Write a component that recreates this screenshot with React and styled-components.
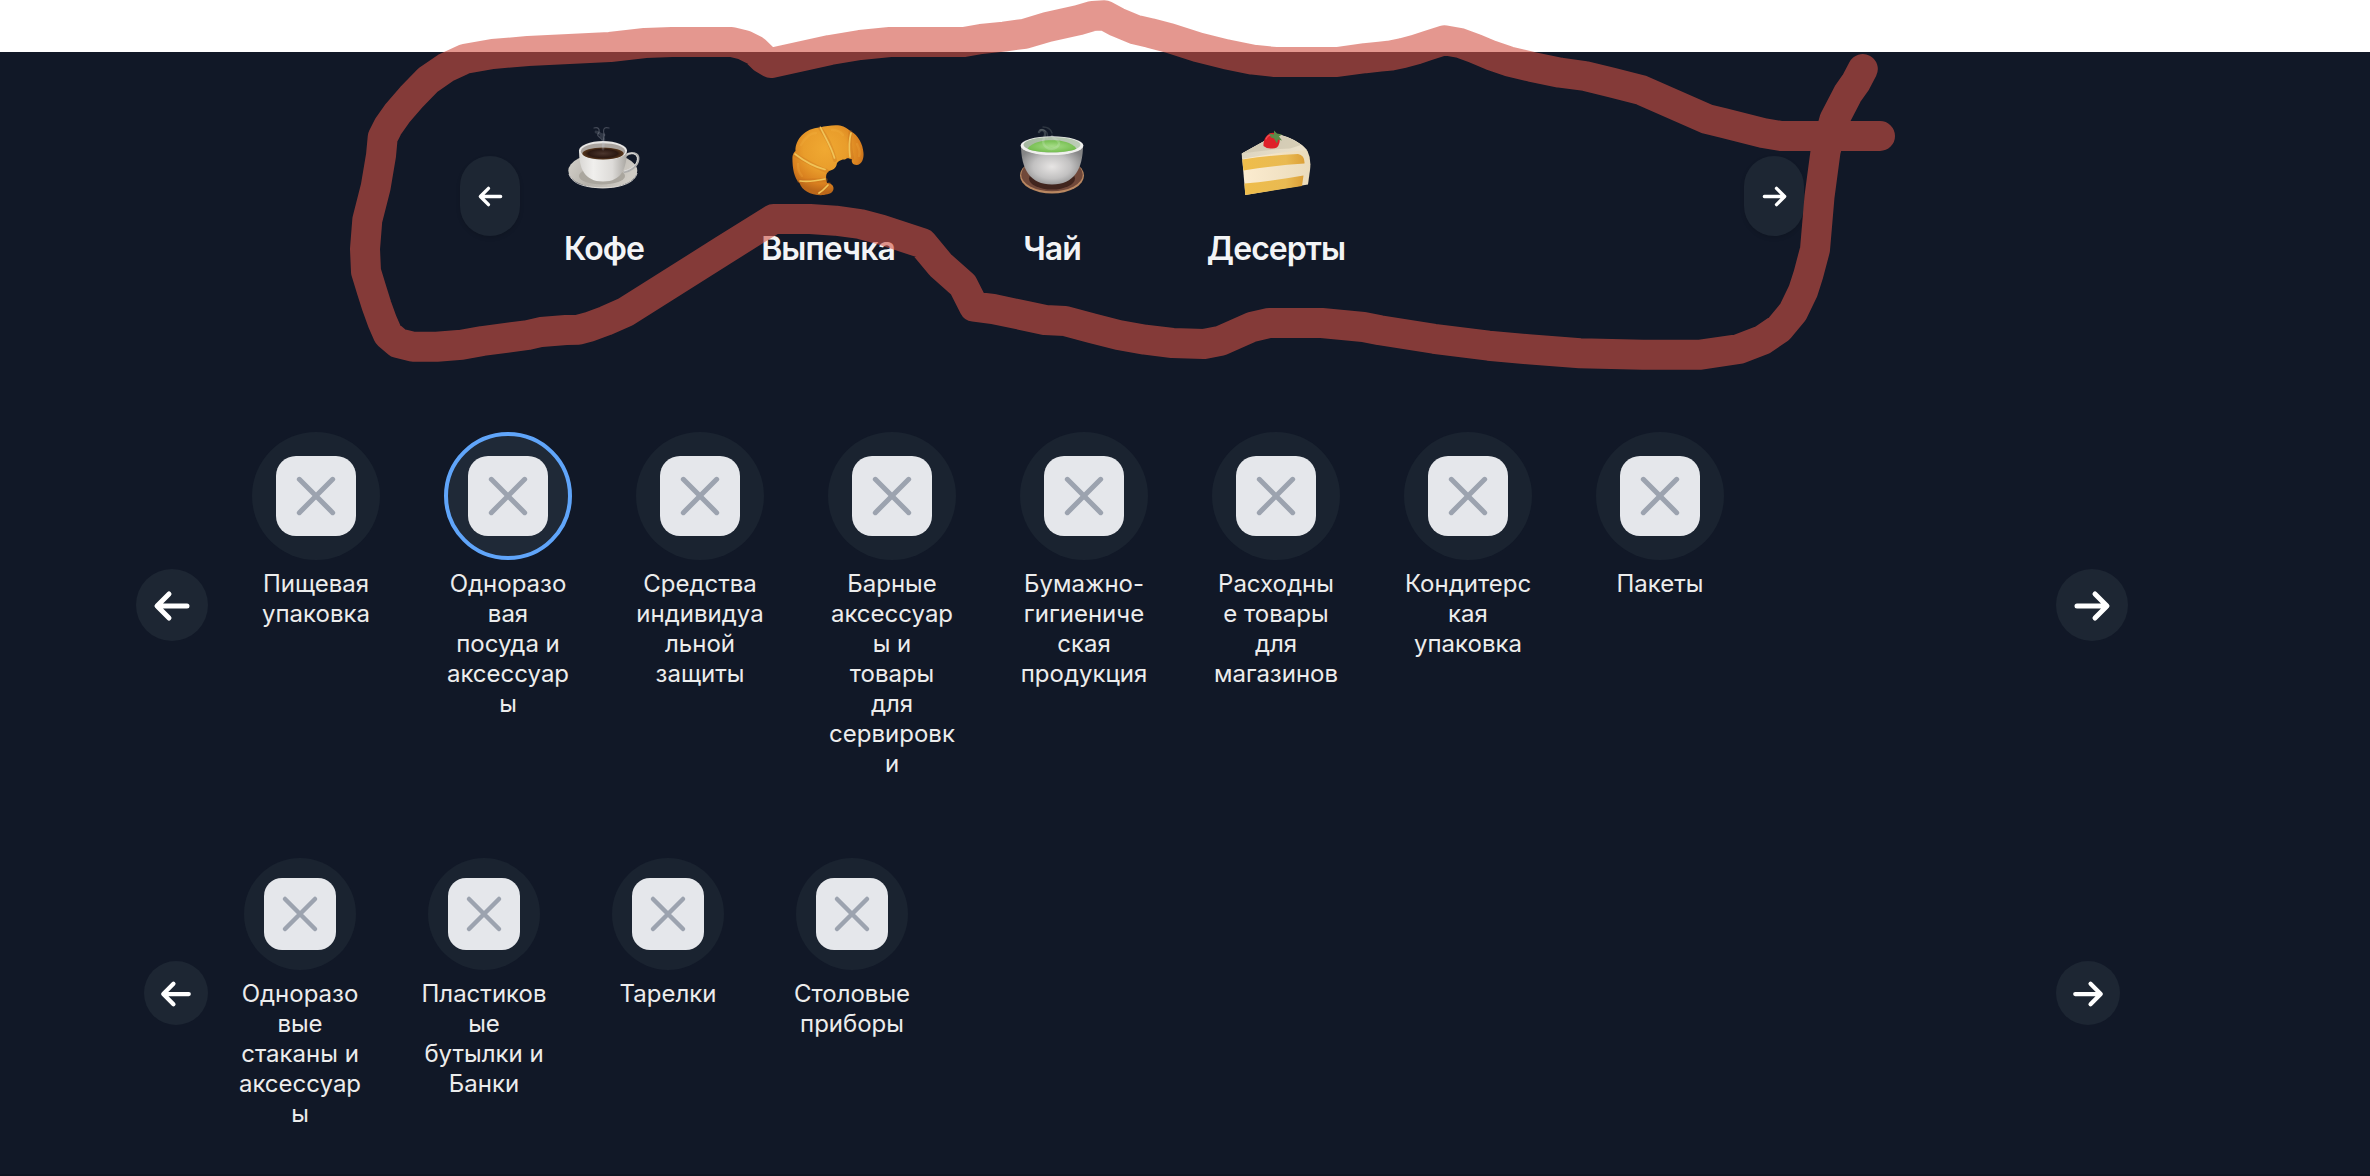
import React from "react";
import styled, { createGlobalStyle, css } from "styled-components";

const GlobalStyle = createGlobalStyle`
  * { box-sizing: border-box; }
  body { margin: 0; background: #fff; font-family: Inter, "Noto Sans", sans-serif; }
`;

const Page = styled.div`
  position: relative;
  width: 2370px;
  height: 1176px;
  padding-top: 52px;
  overflow: hidden;
  background: #fff;
`;

const Panel = styled.main`
  display: flex;
  flex-direction: column;
  height: 1124px;
  background: #111827;
  border-bottom: 2px solid #0e1421;
`;

const MenuSlider = styled.section`
  display: flex;
  align-items: center;
  height: 160px;
  margin: 64px 566px 0 460px;
`;

const CategorySlider = styled.section`
  display: flex;
  align-items: center;
  justify-content: space-between;
  ${(p) =>
    p.$compact
      ? css`margin: 80px 250px 0 144px; height: 270px;`
      : css`margin: 156px 242px 0 136px; height: 346px;`}
`;

const ArrowButton = styled.button`
  display: flex;
  flex: none;
  align-items: center;
  justify-content: center;
  width: ${(p) => p.$width}px;
  height: ${(p) => p.$height}px;
  padding: 1px 0 0;
  border: 0;
  border-radius: 999px;
  background: #1d2633;
  color: #fff;
  box-shadow: ${(p) => (p.$raised ? "0 2px 4px rgba(0, 0, 0, 0.12)" : "none")};
`;

const MenuList = styled.div`
  display: flex;
  flex: 1;
  gap: 56px;
  padding-top: 4px;
`;

const MenuItem = styled.div`
  display: flex;
  flex-direction: column;
  align-items: center;
  width: 168px;
  gap: 30px;
`;

const Emoji = styled.svg`
  display: block;
  width: 72px;
  height: 72px;
  overflow: visible;
`;

const MenuLabel = styled.span`
  color: #f3f4f6;
  font-size: 32px;
  font-weight: 600;
  line-height: 44px;
  letter-spacing: -0.95px;
  white-space: nowrap;
`;

const CategoryList = styled.div`
  display: flex;
  flex: 1;
  align-self: flex-start;
  gap: ${(p) => (p.$compact ? 56 : 64)}px;
  padding-left: ${(p) => (p.$compact ? 28 : 44)}px;
`;

const Category = styled.div`
  display: flex;
  flex-direction: column;
  align-items: center;
  gap: 9px;
  width: 128px;
`;

const Disc = styled.div`
  display: flex;
  align-items: center;
  justify-content: center;
  width: ${(p) => (p.$compact ? 112 : 128)}px;
  height: ${(p) => (p.$compact ? 112 : 128)}px;
  border-radius: 50%;
  border: ${(p) => (p.$active ? "4px solid #60a5fa" : "0")};
  background: ${(p) => (p.$active ? "#1f2937" : "#1a2330")};
`;

const Tile = styled.div`
  width: ${(p) => (p.$compact ? 72 : 80)}px;
  height: ${(p) => (p.$compact ? 72 : 80)}px;
  border-radius: ${(p) => (p.$compact ? 18 : 20)}px;
  background: #e5e7eb;
  color: #9ca3af;
  svg { display: block; width: 100%; height: 100%; }
`;

const CategoryLabel = styled.div`
  display: flex;
  flex-direction: column;
  align-items: center;
  color: #ececec;
  font-size: 24px;
  font-weight: 400;
  line-height: 30px;
  white-space: nowrap;
`;

const Marker = styled.svg`
  position: absolute;
  inset: 0;
  width: 2370px;
  height: 1176px;
  pointer-events: none;
`;

function Arrow({ size, back }) {
  return (
    <svg width={size} height={size} viewBox="0 0 24 24" fill="none" stroke="currentColor" strokeWidth="3" strokeLinecap="round" strokeLinejoin="round">
      <path d={back ? "M10.2 4.8L3 12l7.2 7.2M3.2 12H21" : "M13.8 4.8L21 12l-7.2 7.2M20.8 12H3"} />
    </svg>
  );
}

function CoffeeIcon() {
  return (
    <Emoji viewBox="0 0 72 72">
      <defs>
        <linearGradient id="saucer" x1="0" y1="0" x2="1" y2="0.3">
          <stop offset="0" stopColor="#d6d3cd" /><stop offset="0.5" stopColor="#b5b1aa" /><stop offset="1" stopColor="#d0ccc5" />
        </linearGradient>
        <linearGradient id="cup" x1="0" y1="0" x2="1" y2="0">
          <stop offset="0" stopColor="#d9d7d4" /><stop offset="0.3" stopColor="#f0efed" /><stop offset="0.7" stopColor="#dddbd8" /><stop offset="1" stopColor="#a9a6a1" />
        </linearGradient>
        <radialGradient id="coffee"><stop offset="0" stopColor="#4b352d" /><stop offset="0.7" stopColor="#2d1912" /><stop offset="1" stopColor="#5c3a1d" /></radialGradient>
      </defs>
      <ellipse cx="34.8" cy="45.8" rx="34.5" ry="17.4" fill="url(#saucer)" />
      <path d="M1 49C4 59 18 62.8 35 62.8S67 58 69 48" fill="none" stroke="#e2dfda" strokeWidth="0.9" />
      <ellipse cx="34" cy="51" rx="23" ry="8.5" fill="#aaa69e" />
      <path d="M57 31C63 26 71 28 70.2 34.5C69.6 41 63 46 55.5 47" fill="none" stroke="#aeadac" strokeWidth="2.4" />
      <path d="M57 30.5C63 26 70 28.5 69.4 34.5C69 40 62 45 56 46" fill="none" stroke="#e4e3e1" strokeWidth="0.9" />
      <path d="M11 25C11 43 16 56.5 35 56.5S58.8 43 58.8 25z" fill="url(#cup)" />
      <ellipse cx="35" cy="25.6" rx="24" ry="9.5" fill="#e8e6e4" />
      <ellipse cx="35" cy="26.4" rx="22.2" ry="8.2" fill="#aaa49f" />
      <ellipse cx="35" cy="28.5" rx="20.6" ry="6" fill="url(#coffee)" />
      <g fill="none" stroke="#c9ccd8" strokeLinecap="round">
        <path d="M26 3c6-2 6 4 4 6s4 4 4 6M41 3c-6-2-6 3-5 6s-2 5-1 14" strokeWidth="1.2" opacity="0.28" />
        <path d="M28 7c3 0 4 3 8 3M33 11c4 2 3 5 2 13" strokeWidth="2.8" opacity="0.18" />
      </g>
    </Emoji>
  );
}

function CroissantIcon() {
  return (
    <Emoji viewBox="0 0 72 72">
      <defs>
        <radialGradient id="crust" gradientUnits="userSpaceOnUse" cx="33" cy="24" r="43">
          <stop offset="0" stopColor="#f0a932" /><stop offset="0.5" stopColor="#e99d2b" /><stop offset="0.82" stopColor="#d9801f" /><stop offset="1" stopColor="#bb6719" />
        </radialGradient>
      </defs>
      <path d="M28 2.5C34 .6 43 -.4 48 .5C53 1.5 56 4 59 6.5C66 10 71 19 71.5 28C72 33 70 40 64.5 40C61 40 59 37 60 34C57 34 56 32 53 34.5C49 34 45 37 44.8 39C44 43 41 45 37 46C33 49 34 53 35 58C37 58 42 59 41.5 64C41 68 37 69 32 70C20 71 10 66 7.5 58C2 53 .4 43 .4 33C.3 30 2 27 3.5 26C3 15 13 3 28 2.5z" fill="url(#crust)" />
      <g fill="none" strokeLinecap="round">
        <path d="M28 3C35 12 40 23 43 35M58.5 7C57 15 58 24 60 33M3 30C13 35 24 43 35 46M7 56C15 56 24 55 34 55M27 68C32 65 34 62 37 59" stroke="#bd671c" strokeWidth="4" opacity="0.28" />
        <path d="M28.5 2.5C33 12 39 21 42.5 33M59 8C57 15 57 24 58 32M3 29C12 36 23 42 33 44.5M8 56C14 57 24 56 33 54M27 68C31 66 33 63 36 60" stroke="#f0c458" strokeWidth="1.7" />
        <path d="M9 20C14 11 20 8 24 8M40 5C46 5 49 7 51 10M65 19C68 25 68 29 67 31M6 39C6 45 8 49 10 51" stroke="#f8bd4b" strokeWidth="2.4" opacity="0.2" />
      </g>
    </Emoji>
  );
}

function TeaIcon() {
  return (
    <Emoji viewBox="0 0 72 72">
      <defs>
        <radialGradient id="bowl" cx="0.5" cy="0.55" r="0.55">
          <stop offset="0" stopColor="#e7e5e4" /><stop offset="0.55" stopColor="#c2c1c1" /><stop offset="1" stopColor="#858586" />
        </radialGradient>
        <linearGradient id="glaze" x1="0" y1="0" x2="1" y2="0"><stop offset="0" stopColor="#a5b7a0" /><stop offset="1" stopColor="#bdcdb8" /></linearGradient>
        <radialGradient id="tea" cx="0.5" cy="0.5" r="0.6"><stop offset="0" stopColor="#a5dc86" /><stop offset="1" stopColor="#6cb846" /></radialGradient>
      </defs>
      <ellipse cx="36" cy="50.5" rx="32" ry="18" fill="#b98761" />
      <ellipse cx="36" cy="49.7" rx="30.8" ry="16.6" fill="#70483a" />
      <ellipse cx="36" cy="53.5" rx="23" ry="11" fill="#41251e" />
      <path d="M5 20C5 44 14 59.5 36 59.5S67 44 67 20z" fill="url(#bowl)" />
      <ellipse cx="36" cy="20.7" rx="31.4" ry="9.4" fill="#efefed" />
      <ellipse cx="36" cy="19.7" rx="28.5" ry="7.8" fill="url(#glaze)" />
      <path d="M11.5 23.5C17 17 26 15.3 36 15.3S55 17 60.5 23.5C54 28.5 18 28.5 11.5 23.5z" fill="url(#tea)" />
      <g fill="none" stroke="#e5efe6" strokeLinecap="round">
        <path d="M23 7c3-4 7-1 6 3s-4 8 1 12 12 1 13-3-6-5-7-8" strokeWidth="2.4" opacity="0.2" />
        <path d="M27 2c5 0 8 3 9 6M24 5c5-1 9 2 7 8" strokeWidth="1.4" opacity="0.14" />
      </g>
    </Emoji>
  );
}

function CakeIcon() {
  return (
    <Emoji viewBox="0 0 72 72">
      <defs>
        <linearGradient id="icing" x1="0" y1="0" x2="1" y2="0"><stop offset="0" stopColor="#ddd5bf" /><stop offset="1" stopColor="#ece2cc" /></linearGradient>
        <linearGradient id="cream" x1="0" y1="0" x2="1" y2="0"><stop offset="0" stopColor="#fcecd0" /><stop offset="1" stopColor="#eadbbb" /></linearGradient>
        <linearGradient id="sponge" x1="0" y1="0" x2="1" y2="0"><stop offset="0" stopColor="#efbd4b" /><stop offset="0.7" stopColor="#e9ba52" /><stop offset="1" stopColor="#dca038" /></linearGradient>
      </defs>
      <path d="M1.8 28.5L37 9Q59 14.5 67.5 26Q71.5 34 70 45L68 59.5L5.3 70z" fill="url(#cream)" />
      <path d="M1.8 28.5L37 9Q57 13.5 67 25Q40 27 2 34z" fill="url(#icing)" />
      <path d="M2 28.5L37 9Q52 13 61 20L50 23.5Q25 24.5 2 28.5z" fill="#c9c1aa" opacity="0.6" />
      <path d="M2.2 34.5Q33 30 58 29Q65 30.5 64.5 38.5Q34 40.5 3.4 45.5z" fill="url(#sponge)" />
      <path d="M4.5 58.5Q36 55.5 63.5 50.5L62 61L5.3 70z" fill="url(#sponge)" />
      <path d="M23.5 21C23 15 27 7.5 33 7.7C39 8.5 41 14 39 19Q38 23.6 32 23.5Q27 24 23.5 21z" fill="#df2029" />
      <path d="M26 14q2-4 5-4" fill="none" stroke="#ff7775" strokeWidth="1.2" strokeLinecap="round" opacity="0.6" />
      <path d="M29 8.5l5 1 0-4 3 3 5 1-3 2 3 4-4-1-1 4-3-5-3-1z" fill="#5b8a48" />
    </Emoji>
  );
}

const MENU = [
  { label: "Кофе", Icon: CoffeeIcon },
  { label: "Выпечка", Icon: CroissantIcon },
  { label: "Чай", Icon: TeaIcon },
  { label: "Десерты", Icon: CakeIcon },
];

const CATEGORIES = [
  { lines: ["Пищевая", "упаковка"] },
  { lines: ["Одноразо", "вая", "посуда и", "аксессуар", "ы"], active: true },
  { lines: ["Средства", "индивидуа", "льной", "защиты"] },
  { lines: ["Барные", "аксессуар", "ы и", "товары", "для", "сервировк", "и"] },
  { lines: ["Бумажно-", "гигиениче", "ская", "продукция"] },
  { lines: ["Расходны", "е товары", "для", "магазинов"] },
  { lines: ["Кондитерс", "кая", "упаковка"] },
  { lines: ["Пакеты"] },
];

const SUBCATEGORIES = [
  { lines: ["Одноразо", "вые", "стаканы и", "аксессуар", "ы"] },
  { lines: ["Пластиков", "ые", "бутылки и", "Банки"] },
  { lines: ["Тарелки"] },
  { lines: ["Столовые", "приборы"] },
];

function Categories({ items, compact }) {
  const size = compact ? 64 : 72;
  const icon = compact ? 34 : 40;
  return (
    <CategorySlider $compact={compact}>
      <ArrowButton $width={size} $height={size}><Arrow size={icon} back /></ArrowButton>
      <CategoryList $compact={compact}>
        {items.map(({ lines, active }) => (
          <Category key={lines.join("")}>
            <Disc $compact={compact} $active={active}>
              <Tile $compact={compact}>
                <svg viewBox="0 0 24 24" fill="none" stroke="currentColor" strokeWidth="1.5" strokeLinecap="round">
                  <path d="M7 7l10 10M17 7L7 17" />
                </svg>
              </Tile>
            </Disc>
            <CategoryLabel>
              {lines.map((line) => <span key={line}>{line}</span>)}
            </CategoryLabel>
          </Category>
        ))}
      </CategoryList>
      <ArrowButton $width={size} $height={size}><Arrow size={icon} /></ArrowButton>
    </CategorySlider>
  );
}

const MARKER_PATH =
  "M1880 136L1781 136L1763 133L1723.5 123L1707 119L1641 90L1611.6 82.5L1585 76L1560 72.7L1531 66.7L1508.6 61.3L1491 55.3L1475 48.5L1460 43L1444.4 40.3L1428 45.5L1416 49.5L1403 53L1391 55.5L1380 56.7L1365 58.2L1337 62L1275 62L1253 59.7L1226 54.3L1198 47.3L1170 38.3L1150 33L1135 29.5L1117 22L1104.5 15.3L1092.5 16L1079 20L1047.5 27L1024.5 33.8L1004 36.6L981 39L964 42L890 42L860 45L830 50L771 63L763 58.3L755 50.5L744 45L731.7 42L672 42L645 43L610 47L528 51L492.5 54L465.5 58.7L446 67.7L428 80L411.7 96.7L397 113.8L388 126.7L382.7 137.3L381 155.5L375.7 187L367.3 220L365 249L366 271.5L371.5 289.5L376.7 306L382.3 321.5L388 334.5L398 343L413 346.8L436.7 346.8L461.7 344.8L482.5 341L528 335L541 332L566 330L578.3 329.7L589.5 326.8L605.7 320.8L625.5 312L723 250.5L773.5 219L810 219L835.5 220.7L860 224L880.7 229.5L922.5 243.3L940.5 265L963 285L974 306.7L993 309L1025 315.7L1045 320L1065 321L1092 328.3L1118.5 335L1145 339.7L1172.5 343L1204 344L1220.7 340.7L1251.7 327L1269.3 323L1321.7 323L1363.5 327L1380 330.3L1434 338.8L1488.5 345.7L1528 349.3L1580 353.2L1643 354.8L1699 354.8L1739 349L1763 339.7L1779.5 328.3L1793 312L1803 291.3L1808.4 274.5L1815 249.5L1819.5 196.7L1825.6 151L1834.5 119.3L1848 93.3L1856 82L1862.8 69";

export default function App() {
  return (
    <Page>
      <GlobalStyle />
      <Panel>
        <MenuSlider>
          <ArrowButton $width={60} $height={80} $raised><Arrow size={27} back /></ArrowButton>
          <MenuList>
            {MENU.map(({ label, Icon }) => (
              <MenuItem key={label}>
                <Icon />
                <MenuLabel>{label}</MenuLabel>
              </MenuItem>
            ))}
          </MenuList>
          <ArrowButton $width={60} $height={80} $raised><Arrow size={27} /></ArrowButton>
        </MenuSlider>
        <Categories items={CATEGORIES} />
        <Categories items={SUBCATEGORIES} compact />
      </Panel>
      <Marker viewBox="0 0 2370 1176">
        <path d={MARKER_PATH} fill="none" stroke="rgb(210,82,68)" strokeOpacity="0.6" strokeWidth="30" strokeLinecap="round" strokeLinejoin="round" />
      </Marker>
    </Page>
  );
}
